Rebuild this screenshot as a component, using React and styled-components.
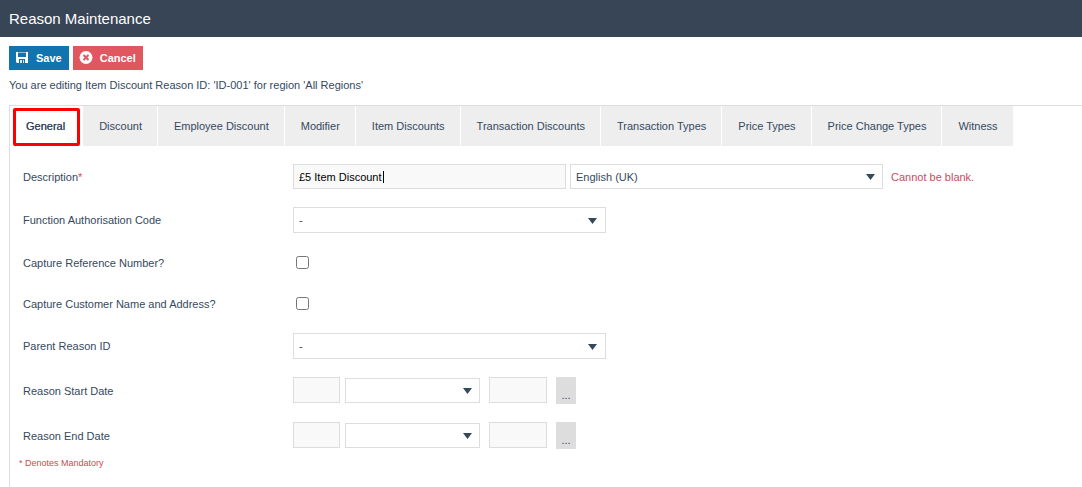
import React, { useState } from "react";
import styled, { createGlobalStyle } from "styled-components";

const GlobalStyle = createGlobalStyle`
  * {
    box-sizing: border-box;
  }
  body {
    margin: 0;
    background: #ffffff;
    color: #34495e;
    font-family: "Liberation Sans", Arial, sans-serif;
    font-size: 11px;
    line-height: 14px;
  }
  button, input, select {
    font: inherit;
    color: inherit;
    margin: 0;
  }
`;

const Page = styled.div`
  display: flex;
  flex-direction: column;
  min-height: 100vh;
`;

const Header = styled.header`
  display: flex;
  align-items: center;
  height: 37px;
  padding: 0 9px;
  background: #374556;
`;

const Title = styled.h1`
  margin: 0;
  color: #ffffff;
  font-size: 15px;
  line-height: 20px;
  font-weight: normal;
`;

const Main = styled.main`
  display: flex;
  flex-direction: column;
  flex: 1;
  padding: 9px 0 0 9px;
`;

const Toolbar = styled.div`
  display: flex;
  gap: 4px;
`;

const ActionButton = styled.button`
  display: flex;
  align-items: center;
  gap: 7px;
  height: 24px;
  padding: 0 7px 0 6px;
  border: 0;
  background: ${props => props.$danger ? "#e15760" : "#1174ae"};
  color: #ffffff;
  font-weight: bold;
  cursor: pointer;
`;

const Message = styled.p`
  margin: 8px 0 13px;
`;

const Panel = styled.section`
  flex: 1;
  border-top: 1px solid #dddddd;
  border-left: 1px solid #dddddd;
`;

const TabList = styled.div`
  display: flex;
  gap: 1px;
`;

const Tab = styled.button`
  height: 40px;
  padding: 0 15px 0 16px;
  border: 0;
  background: ${props => props.$active ? "#ffffff" : "#eeeeee"};
  white-space: nowrap;
  cursor: pointer;

  ${props => props.$active && `
    height: 38px;
    margin: 2px 2px 0 3px;
    padding: 0 12px 2px 10px;
    border: 3px solid #ff0000;
    border-radius: 2px;
    text-shadow: 0 0 0 #34495e;
  `}
`;

const Form = styled.form`
  display: flex;
  flex-direction: column;
  gap: 18px;
  padding: 18px 13px 0;
`;

const Row = styled.div`
  display: grid;
  grid-template-columns: 270px 1fr;
  align-items: center;
  min-height: 23px;
`;

const Fields = styled.div`
  display: flex;
  align-items: center;
  gap: 4px;
`;

const Required = styled.span`
  color: #d9455a;
`;

const ErrorText = styled.span`
  margin-left: 4px;
  color: #cc4b60;
`;

const Footnote = styled.p`
  margin: 7px 9px;
  color: #cc4b50;
  font-size: 9px;
  line-height: 14px;
`;

const TextBox = styled.input`
  display: block;
  width: ${props => props.$width}px;
  height: ${props => props.$tall ? 26 : 25}px;
  padding: 0 5px;
  border: 1px solid #dddddd;
  border-radius: 0;
  background: #f9f9f9;
  color: #000000;
  outline: none;
  caret-color: transparent;
`;

const InputWrapper = styled.div`
  position: relative;
`;

const Caret = styled.span`
  position: absolute;
  left: 90px;
  top: 7px;
  width: 1px;
  height: 12px;
  background: #000000;
`;

const SelectWrapper = styled.div`
  position: relative;
  width: ${props => props.$width}px;
`;

const SelectBox = styled.select`
  display: block;
  appearance: none;
  width: 100%;
  height: ${props => props.$tall ? 26 : 25}px;
  padding: 0 24px 0 5px;
  border: 1px solid #dddddd;
  border-radius: 0;
  background: #ffffff;
`;

const Arrow = styled.svg`
  position: absolute;
  right: ${props => props.$tall ? 9 : 8}px;
  top: ${props => props.$tall ? 11 : 10}px;
  pointer-events: none;
`;

const Checkbox = styled.input`
  display: block;
  width: 13px;
  height: 13px;
  margin-left: 3px;
`;

const DateFields = styled.div`
  display: flex;
  align-items: flex-start;
`;

const MonthField = styled.div`
  margin: 1px 9px 0 5px;
`;

const PickerButton = styled.button`
  width: 20px;
  height: 27px;
  margin-left: 9px;
  padding: 8px 0 0;
  border: 0;
  background: #dddddd;
  cursor: pointer;
`;

const tabs = [
  "General",
  "Discount",
  "Employee Discount",
  "Modifier",
  "Item Discounts",
  "Transaction Discounts",
  "Transaction Types",
  "Price Types",
  "Price Change Types",
  "Witness",
];

function SaveIcon() {
  return (
    <svg width="14" height="14" viewBox="0 0 14 14" aria-hidden="true">
      <path fill="#ffffff" d="M1 1h12v11H2l-1-1z"/>
      <path fill="#1174ae" d="M3 2h8v4H3zM4 8h6v4H4z"/>
      <path fill="#8fbfdd" d="M3 1h8v1H3z"/>
      <path fill="#d6e7f2" d="M5 9h4v3H5z"/>
      <path fill="#1174ae" d="M7 9h1v3H7z"/>
    </svg>
  );
}

function CancelIcon() {
  return (
    <svg width="14" height="14" viewBox="0 0 14 14" aria-hidden="true">
      <circle cx="7" cy="6.5" r="6.5" fill="#ffffff"/>
      <path d="M4.5 4l5 5M9.5 4l-5 5" stroke="#e15760" strokeWidth="2"/>
    </svg>
  );
}

function Select({ id, label, width, tall, children }) {
  return (
    <SelectWrapper $width={width}>
      <SelectBox id={id} aria-label={label} $tall={tall}>{children}</SelectBox>
      <Arrow $tall={tall} width="9" height="6" viewBox="0 0 9 6" aria-hidden="true">
        <path d="M0 0h9L4.5 6z" fill="#34495e"/>
      </Arrow>
    </SelectWrapper>
  );
}

function DateRow({ id, label }) {
  return (
    <Row>
      <label htmlFor={id}>{label}</label>
      <DateFields>
        <TextBox id={id} $width={47} $tall/>
        <MonthField>
          <Select label={`${label} month`} width={135}>
            <option></option>
            <option>January</option>
          </Select>
        </MonthField>
        <TextBox aria-label={`${label} year`} $width={58} $tall/>
        <PickerButton type="button">...</PickerButton>
      </DateFields>
    </Row>
  );
}

function App() {
  const [activeTab, setActiveTab] = useState("General");

  return (
    <Page>
      <GlobalStyle/>
      <Header>
        <Title>Reason Maintenance</Title>
      </Header>
      <Main>
        <Toolbar>
          <ActionButton type="button"><SaveIcon/>Save</ActionButton>
          <ActionButton type="button" $danger><CancelIcon/>Cancel</ActionButton>
        </Toolbar>
        <Message>You are editing Item Discount Reason ID: 'ID-001' for region 'All Regions'</Message>
        <Panel>
          <TabList role="tablist">
            {tabs.map(tab => (
              <Tab
                key={tab}
                type="button"
                role="tab"
                aria-selected={tab === activeTab}
                $active={tab === activeTab}
                onClick={() => setActiveTab(tab)}
              >
                {tab}
              </Tab>
            ))}
          </TabList>
          <Form>
            <Row>
              <label htmlFor="description">Description<Required>*</Required></label>
              <Fields>
                <InputWrapper>
                  <TextBox id="description" $width={273} defaultValue="£5 Item Discount"/>
                  <Caret/>
                </InputWrapper>
                <Select label="Language" width={313}>
                  <option>English (UK)</option>
                </Select>
                <ErrorText>Cannot be blank.</ErrorText>
              </Fields>
            </Row>
            <Row>
              <label htmlFor="authCode">Function Authorisation Code</label>
              <Select id="authCode" width={313} tall>
                <option>-</option>
              </Select>
            </Row>
            <Row>
              <label htmlFor="captureReference">Capture Reference Number?</label>
              <Checkbox id="captureReference" type="checkbox"/>
            </Row>
            <Row>
              <label htmlFor="captureCustomer">Capture Customer Name and Address?</label>
              <Checkbox id="captureCustomer" type="checkbox"/>
            </Row>
            <Row>
              <label htmlFor="parentReason">Parent Reason ID</label>
              <Select id="parentReason" width={313} tall>
                <option>-</option>
              </Select>
            </Row>
            <DateRow id="startDate" label="Reason Start Date"/>
            <DateRow id="endDate" label="Reason End Date"/>
          </Form>
          <Footnote>* Denotes Mandatory</Footnote>
        </Panel>
      </Main>
    </Page>
  );
}

export default App;
